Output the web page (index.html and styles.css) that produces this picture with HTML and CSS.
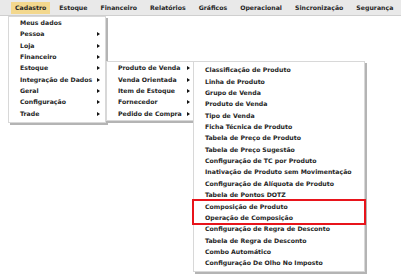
FILE: index.html
```html
<!DOCTYPE html>
<html lang="pt">
<head>
    <meta charset="UTF-8">
    <title>Menu Cadastro</title>
    <link rel="stylesheet" href="styles.css">
</head>
<body>

<div class="page">
    <div class="menubar">
        <span class="top-item active">Cadastro</span>
        <span class="top-item">Estoque</span>
        <span class="top-item">Financeiro</span>
        <span class="top-item">Relatórios</span>
        <span class="top-item">Gráficos</span>
        <span class="top-item">Operacional</span>
        <span class="top-item">Sincronização</span>
        <span class="top-item">Segurança</span>
    </div>

    <div class="dropdown level1">
        <div class="item">Meus dados</div>
        <div class="item sub">Pessoa</div>
        <div class="item sub">Loja</div>
        <div class="item sub">Financeiro</div>
        <div class="item sub">Estoque
            <div class="dropdown level2">
                <div class="item sub">Produto de Venda
                    <div class="dropdown level3">
                        <div class="item">Classificação de Produto</div>
                        <div class="item">Linha de Produto</div>
                        <div class="item">Grupo de Venda</div>
                        <div class="item">Produto de Venda</div>
                        <div class="item">Tipo de Venda</div>
                        <div class="item">Ficha Técnica de Produto</div>
                        <div class="item">Tabela de Preço de Produto</div>
                        <div class="item">Tabela de Preço Sugestão</div>
                        <div class="item">Configuração de TC por Produto</div>
                        <div class="item">Inativação de Produto sem Movimentação</div>
                        <div class="item">Configuração de Alíquota de Produto</div>
                        <div class="item">Tabela de Pontos DOTZ</div>
                        <div class="mark-group">
                            <div class="item">Composição de Produto</div>
                            <div class="item">Operação de Composição</div>
                        </div>
                        <div class="item">Configuração de Regra de Desconto</div>
                        <div class="item">Tabela de Regra de Desconto</div>
                        <div class="item">Combo Automático</div>
                        <div class="item">Configuração De Olho No Imposto</div>
                    </div>
                </div>
                <div class="item sub">Venda Orientada</div>
                <div class="item sub">Item de Estoque</div>
                <div class="item sub">Fornecedor</div>
                <div class="item sub">Pedido de Compra</div>
            </div>
        </div>
        <div class="item sub">Integração de Dados</div>
        <div class="item sub">Geral</div>
        <div class="item sub">Configuração</div>
        <div class="item sub">Trade</div>
    </div>
</div>

</body>
</html>
```

FILE: styles.css
```css
body {
    margin: 0;
    background: #fff;
    font-family: "DejaVu Sans", Verdana, sans-serif;
    font-size: 6.2px;
    font-weight: bold;
    color: #262626;
}
.page {
    position: relative;
    height: 280px;
}
.menubar {
    display: flex;
    align-items: center;
    height: 16px;
    padding-left: 11px;
    background: #e9e9e9;
    border-bottom: 1px solid #cfcfcf;
    box-sizing: border-box;
}
.top-item {
    padding: 2px 4px;
    margin-right: 5px;
    line-height: 8px;
}
.top-item.active {
    background: #f3d88e;
}
.dropdown {
    position: absolute;
    background: #fff;
    border: 1px solid #d8d8d8;
    box-shadow: 2px 2px 0 #b4b4b4;
}
.item {
    position: relative;
    height: 11.35px;
    line-height: 11.35px;
    padding-left: 11px;
    white-space: nowrap;
}
.item.sub::after {
    content: "";
    position: absolute;
    top: 4px;
    right: 5px;
    border-left: 3px solid #111;
    border-top: 2px solid transparent;
    border-bottom: 2px solid transparent;
}
.level1 {
    top: 16px;
    left: 8px;
    width: 96px;
    padding-bottom: 3px;
}
.level2 {
    top: -1px;
    left: 97px;
    width: 88px;
    padding-bottom: 1px;
    z-index: 1;
}
.level3 {
    top: -1px;
    left: 86px;
    width: 170px;
    padding: 2px 0 2px;
    z-index: 2;
}
.mark-group {
    margin: -2px -2px;
    border: 2px solid #e8141b;
    position: relative;
    z-index: 1;
}
.mark-group .item {
    padding-left: 11px;
}
```
